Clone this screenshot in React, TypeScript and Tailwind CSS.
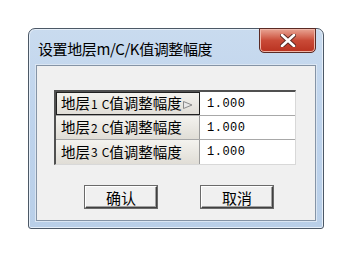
import React from "react";

const cjk = { fontFamily: '"Noto Sans CJK SC", "Noto Sans", sans-serif' };

function Row({ n, first }: { n: number; first?: boolean }) {
    return (
        <div className="flex h-[24px] border-b border-[#a8a8a8] last:border-b-0">
            <div
                className={
                    "relative flex w-[144px] items-center border-r border-[#9c9c9c] bg-gradient-to-b from-[#f4f3ef] to-[#e0ddd6] pl-[5px] text-[14.5px] leading-none text-black " +
                    (first ? "outline outline-1 -outline-offset-1 outline-[#202020]" : "")
                }
                style={cjk}
            >
                地层<span className="ml-[1px] text-[12px]">{n}</span>
                <span className="ml-[4px] text-[12px]">C</span>值调整幅度
                {first && (
                    <svg className="ml-[1px] mt-[2px]" width="10" height="8" viewBox="0 0 10 8">
                        <path d="M0.5 0.5 L9 4 L0.5 7.5 Z" fill="#e8e8e8" stroke="#8a8a8a" strokeWidth="1"/>
                    </svg>
                )}
            </div>
            <div
                className="flex flex-1 items-center bg-white pl-[7px] text-[12px] tracking-[0.5px] text-black"
                style={{ fontFamily: '"Liberation Mono", monospace' }}
            >
                1.000
            </div>
        </div>
    );
}

function Button({ label }: { label: string }) {
    return (
        <button
            className="flex h-[22px] w-[72px] items-center justify-center border border-t-white border-l-white border-r-[#404040] border-b-[#404040] bg-[#f0f0f0] text-[15px] leading-none text-black shadow-[inset_-1px_-1px_0_#a0a0a0,0_0_0_1px_#6a6a6a]"
            style={cjk}
        >
            {label}
        </button>
    );
}

export default function App() {
    return (
        <div className="h-[256px] w-[353px] bg-white pl-[28px] pt-[28px]">
            <div className="flex h-[201px] w-[296px] flex-col rounded-t-[7px] rounded-b-[3px] border border-[#4c5866] bg-gradient-to-b from-[#c9dbef] via-[#bed3ec] to-[#b9cfe8] shadow-[inset_0_0_0_1px_#e6eff9]">
                <div className="flex h-[36px] items-start justify-between pl-[9px] pr-[7px]">
                    <span className="mt-[10px] text-[15px] leading-[20px] tracking-[-0.4px] text-black" style={cjk}>
                        设置地层m/C/K值调整幅度
                    </span>
                    <div className="mt-[-1px] flex h-[25px] w-[57px] items-center justify-center rounded-b-[5px] border border-[#5a2a24] bg-gradient-to-b from-[#e8a494] via-[#c94a37] to-[#b9311f] shadow-[inset_0_0_0_1px_#f0b6a8]">
                        <svg width="16" height="13" viewBox="0 0 16 13">
                            <path d="M2 1 L14 12 M14 1 L2 12" stroke="#5a2a24" strokeWidth="4.5" strokeLinecap="round"/>
                            <path d="M2 1 L14 12 M14 1 L2 12" stroke="#ffffff" strokeWidth="2.6" strokeLinecap="round"/>
                        </svg>
                    </div>
                </div>
                <div className="mx-[7px] mb-[7px] flex flex-1 flex-col border border-[#8594a6] bg-[#f0f0f0] shadow-[0_0_0_1px_#dbe6f3]">
                    <div className="ml-[17px] mt-[24px] w-[242px] border-l-2 border-t-2 border-l-[#505050] border-t-[#505050] border-r border-b border-r-[#d8d8d8] border-b-[#d8d8d8]">
                        <Row n={1} first/>
                        <Row n={2}/>
                        <Row n={3}/>
                    </div>
                    <div className="mt-[21px] flex gap-[44px] pl-[48px]">
                        <Button label="确认"/>
                        <Button label="取消"/>
                    </div>
                </div>
            </div>
        </div>
    );
}
